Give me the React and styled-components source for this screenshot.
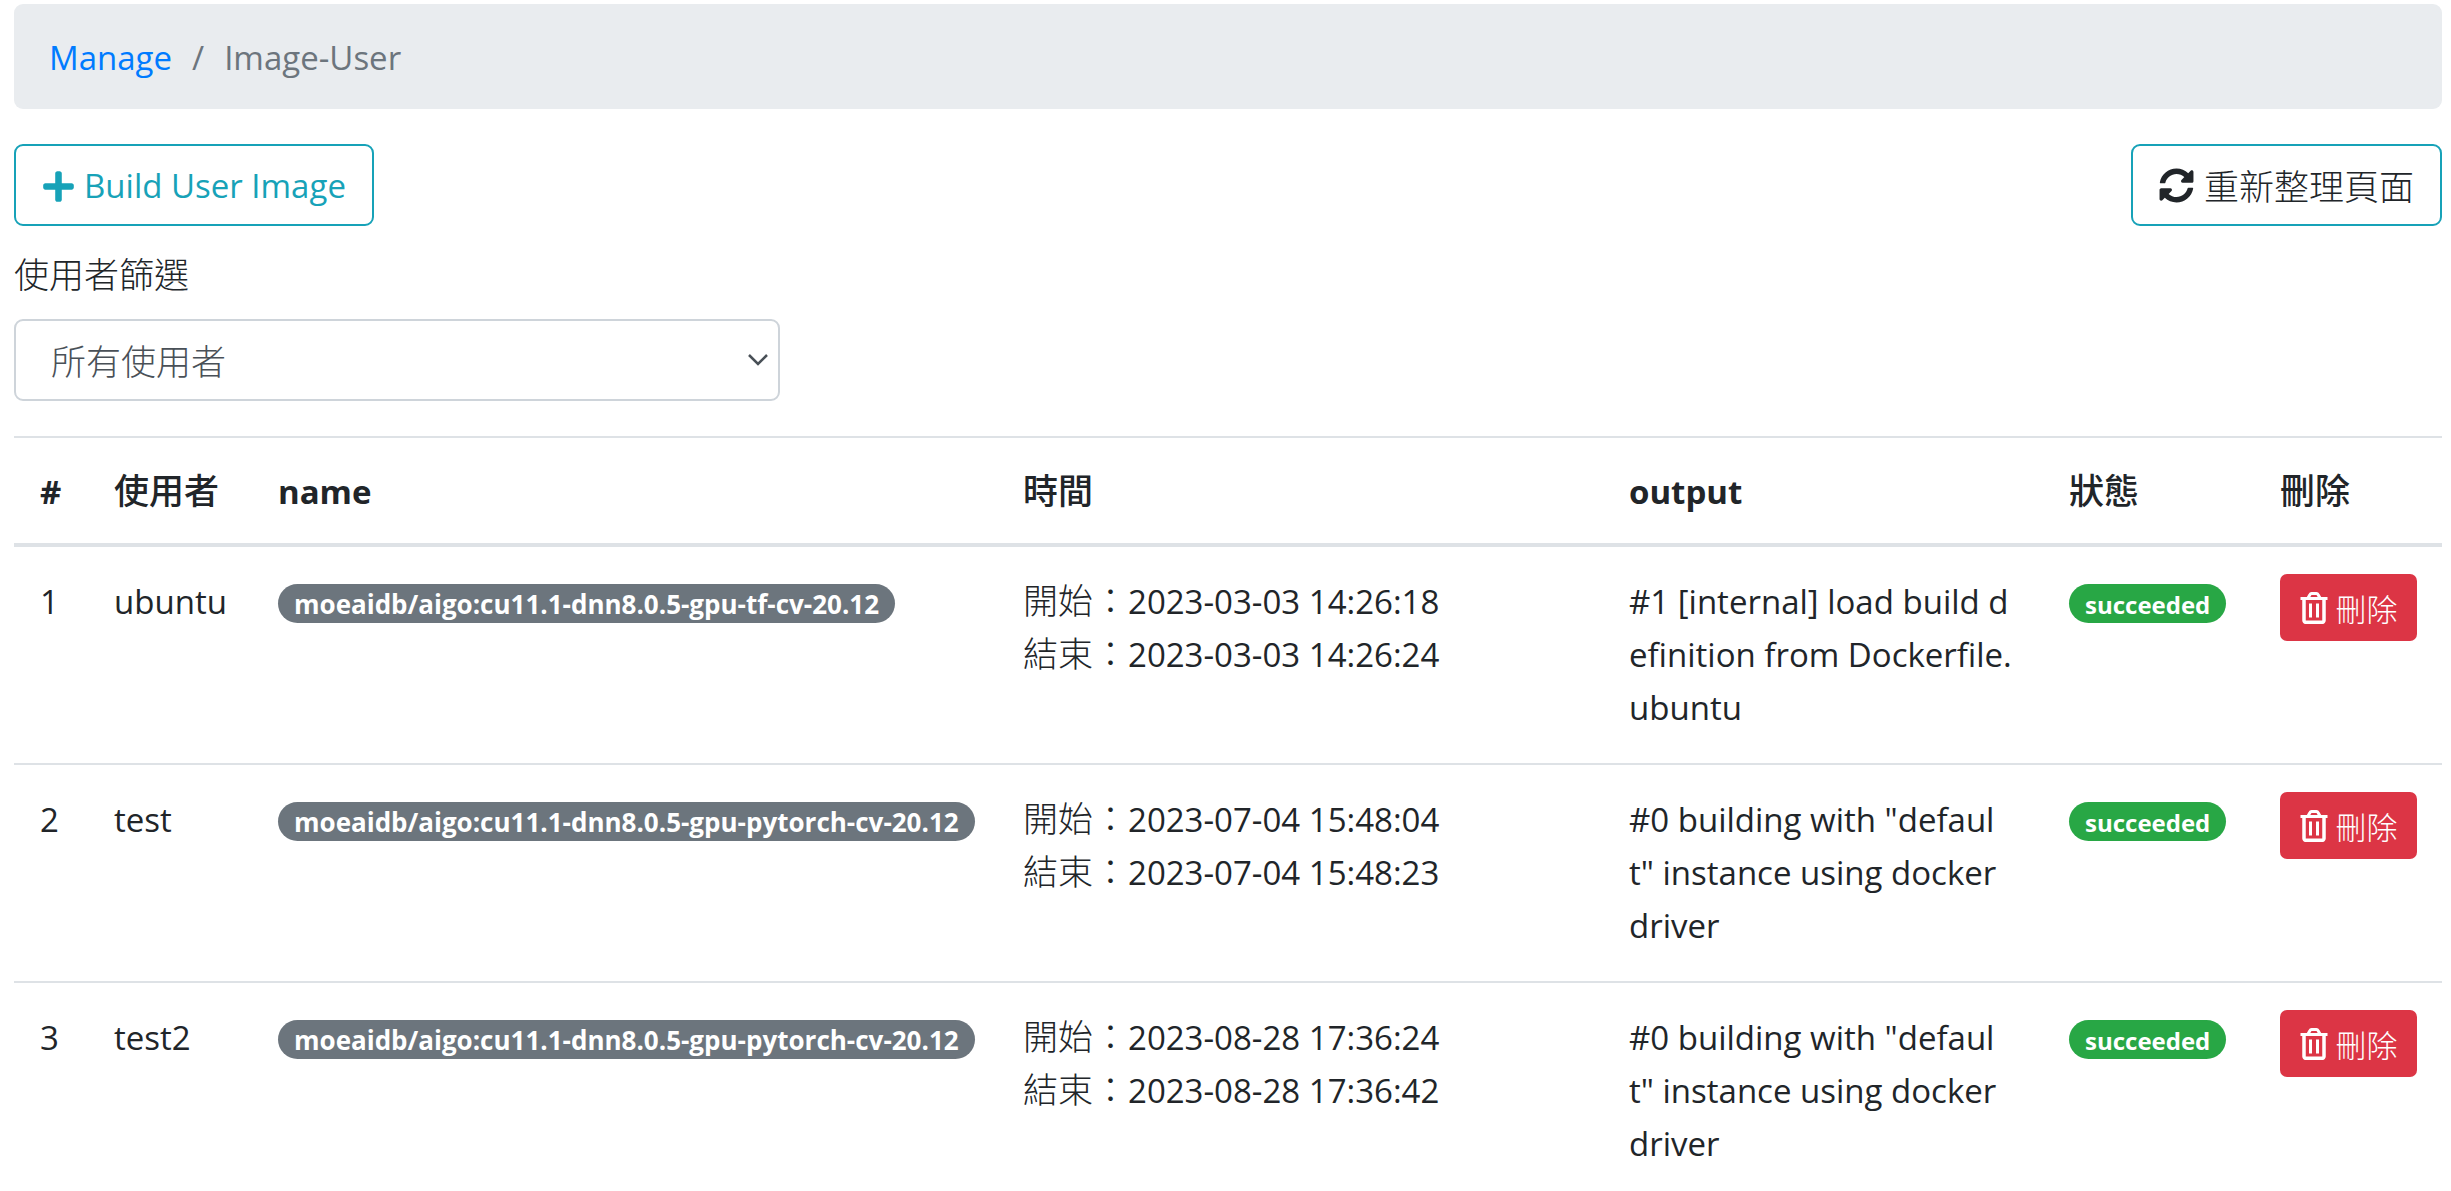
import React from "react";
import styled, { createGlobalStyle, css } from "styled-components";
import { FaPlus, FaSyncAlt } from "react-icons/fa";

const latin = css`
  font-family: "Open Sans", "Noto Sans CJK TC", sans-serif;
  font-size: 33px;
`;

const GlobalStyle = createGlobalStyle`
  *, *::before, *::after { box-sizing: border-box; }
  body {
    margin: 0;
    background: #fff;
    color: #212529;
    font-family: "Open Sans", "Noto Sans CJK TC", sans-serif;
    font-size: 33px;
    line-height: 52px;
  }
`;

const Page = styled.div`
  padding: 4px 9px 0 14px;
`;

const Breadcrumb = styled.ol`
  display: flex;
  margin: 0 0 35px;
  padding: 28px 35px 25px;
  list-style: none;
  background: #e9ecef;
  border-radius: 9px;
`;

const Crumb = styled.li`
  color: #6c757d;
  & + &::before {
    content: "/";
    padding: 0 20px;
  }
`;

const CrumbLink = styled.a`
  color: #007bff;
  text-decoration: none;
`;

const Toolbar = styled.div`
  display: flex;
  justify-content: space-between;
  margin-bottom: 24px;
`;

const OutlineButton = styled.button`
  ${latin}
  display: inline-flex;
  align-items: center;
  gap: ${(p) => p.$gap}px;
  height: 82px;
  padding: ${(p) => (p.$gap < 10 ? "2px 26px 0 25px" : "0 26px")};
  border: 2px solid #17a2b8;
  border-radius: 9px;
  background: transparent;
  color: ${(p) => p.$color};
  line-height: 52px;
`;

const Cjk = styled.span`
  font-family: "Noto Sans CJK TC", sans-serif;
  font-size: 35px;
  line-height: 40px;
  font-weight: ${(p) => (p.$strong ? 500 : 300)};
`;

const Filter = styled.div`
  width: 766px;
  max-width: 100%;
  margin-bottom: 35px;
`;

const FilterLabel = styled.label`
  display: block;
  margin-bottom: 17px;
`;

const SelectBox = styled.div`
  position: relative;
`;

const Select = styled.select`
  display: block;
  width: 100%;
  height: 82px;
  padding: 0 35px;
  border: 2px solid #ced4da;
  border-radius: 9px;
  background: #fff;
  color: #495057;
  font-family: "Noto Sans CJK TC", sans-serif;
  font-size: 35px;
  font-weight: 300;
  line-height: 52px;
  appearance: none;
`;

const Chevron = styled.svg`
  position: absolute;
  right: 12px;
  top: 35px;
  width: 20px;
  height: 12px;
  pointer-events: none;
`;

const Table = styled.table`
  width: 100%;
  table-layout: fixed;
  border-collapse: separate;
  border-spacing: 0;
`;

const Col = styled.col`
  width: ${(p) => (p.$w ? `${p.$w}px` : "auto")};
`;

const HeadCell = styled.th`
  height: 111px;
  padding: 28px 26px 25px;
  border-top: 2px solid #dee2e6;
  border-bottom: 4px solid #dee2e6;
  text-align: left;
  vertical-align: top;
  font-weight: 700;
`;

const Cell = styled.td`
  height: 218px;
  padding: 28px 26px 29px;
  border-bottom: 2px solid #dee2e6;
  line-height: 53px;
  vertical-align: top;
  tr:last-child & { border-bottom: 0; }
`;

const OutputCell = styled(Cell)`
  word-break: break-all;
`;

const ActionCell = styled(Cell)`
  padding: 27px 18px 29px 26px;
`;

const TimeLine = styled.div`
  white-space: nowrap;
`;

const Badge = styled.span`
  display: inline-block;
  height: 39px;
  margin-top: 9px;
  padding: 0 16px;
  border-radius: 20px;
  background: ${(p) => p.$bg};
  color: #fff;
  font-size: ${(p) => p.$size}px;
  font-weight: 700;
  line-height: 41px;
  white-space: nowrap;
  vertical-align: top;
`;

const DeleteButton = styled.button`
  display: inline-flex;
  align-items: center;
  justify-content: center;
  gap: 8px;
  width: 137px;
  height: 67px;
  padding: 0;
  border: 0;
  border-radius: 7px;
  background: #dc3545;
  color: #fff;
  font-family: "Noto Sans CJK TC", sans-serif;
  font-size: 31px;
  font-weight: 300;
  line-height: 46px;
  vertical-align: top;
`;

const TrashIcon = () => (
  <svg width="28" height="32" viewBox="0 0 28 32" fill="none" stroke="currentColor" aria-hidden="true">
    <path d="M0.500 6.500h27M8 6l2-3.500q.5-1 1.500-1h5q1 0 1.500 1L20 6" strokeWidth="3" />
    <path d="M4 7v21.500a1.800 1.800 0 0 0 1.800 1.800h16.400a1.800 1.800 0 0 0 1.800-1.800V7" strokeWidth="3.500" />
    <path d="M10.500 11.500v14M17.500 11.500v14" strokeWidth="3" />
  </svg>
);

const rows = [
  { id: 1, user: "ubuntu", name: "moeaidb/aigo:cu11.1-dnn8.0.5-gpu-tf-cv-20.12", start: "2023-03-03 14:26:18", end: "2023-03-03 14:26:24", output: "#1 [internal] load build definition from Dockerfile.ubuntu" },
  { id: 2, user: "test", name: "moeaidb/aigo:cu11.1-dnn8.0.5-gpu-pytorch-cv-20.12", start: "2023-07-04 15:48:04", end: "2023-07-04 15:48:23", output: '#0 building with "default" instance using docker driver' },
  { id: 3, user: "test2", name: "moeaidb/aigo:cu11.1-dnn8.0.5-gpu-pytorch-cv-20.12", start: "2023-08-28 17:36:24", end: "2023-08-28 17:36:42", output: '#0 building with "default" instance using docker driver' },
];

export default function App() {
  return (
    <>
      <GlobalStyle />
      <Page>
        <nav aria-label="breadcrumb">
          <Breadcrumb>
            <Crumb><CrumbLink href="#manage">Manage</CrumbLink></Crumb>
            <Crumb>Image-User</Crumb>
          </Breadcrumb>
        </nav>
        <Toolbar>
          <OutlineButton type="button" $color="#17a2b8" $gap={8}>
            <FaPlus size={35} />Build User Image
          </OutlineButton>
          <OutlineButton type="button" $color="#212529" $gap={10}>
            <FaSyncAlt size={35} /><Cjk>重新整理頁面</Cjk>
          </OutlineButton>
        </Toolbar>
        <Filter>
          <FilterLabel htmlFor="user-filter"><Cjk>使用者篩選</Cjk></FilterLabel>
          <SelectBox>
            <Select id="user-filter" defaultValue="all">
              <option value="all">所有使用者</option>
            </Select>
            <Chevron viewBox="0 0 20 12" fill="none" stroke="#495057" strokeWidth="2.500" aria-hidden="true">
              <path d="M1 1l9 9 9-9" />
            </Chevron>
          </SelectBox>
        </Filter>
        <Table>
          <colgroup>
            <Col $w={74} /><Col $w={164} /><Col /><Col $w={606} /><Col $w={440} /><Col $w={211} /><Col $w={188} />
          </colgroup>
          <thead>
            <tr>
              <HeadCell scope="col">#</HeadCell>
              <HeadCell scope="col"><Cjk $strong>使用者</Cjk></HeadCell>
              <HeadCell scope="col">name</HeadCell>
              <HeadCell scope="col"><Cjk $strong>時間</Cjk></HeadCell>
              <HeadCell scope="col">output</HeadCell>
              <HeadCell scope="col"><Cjk $strong>狀態</Cjk></HeadCell>
              <HeadCell scope="col"><Cjk $strong>刪除</Cjk></HeadCell>
            </tr>
          </thead>
          <tbody>
            {rows.map((r) => (
              <tr key={r.id}>
                <Cell>{r.id}</Cell>
                <Cell>{r.user}</Cell>
                <Cell><Badge $bg="#6c757d" $size={26}>{r.name}</Badge></Cell>
                <Cell>
                  <TimeLine><Cjk>開始：</Cjk>{r.start}</TimeLine>
                  <TimeLine><Cjk>結束：</Cjk>{r.end}</TimeLine>
                </Cell>
                <OutputCell>{r.output}</OutputCell>
                <Cell><Badge $bg="#28a745" $size={24}>succeeded</Badge></Cell>
                <ActionCell>
                  <DeleteButton type="button"><TrashIcon />刪除</DeleteButton>
                </ActionCell>
              </tr>
            ))}
          </tbody>
        </Table>
      </Page>
    </>
  );
}
